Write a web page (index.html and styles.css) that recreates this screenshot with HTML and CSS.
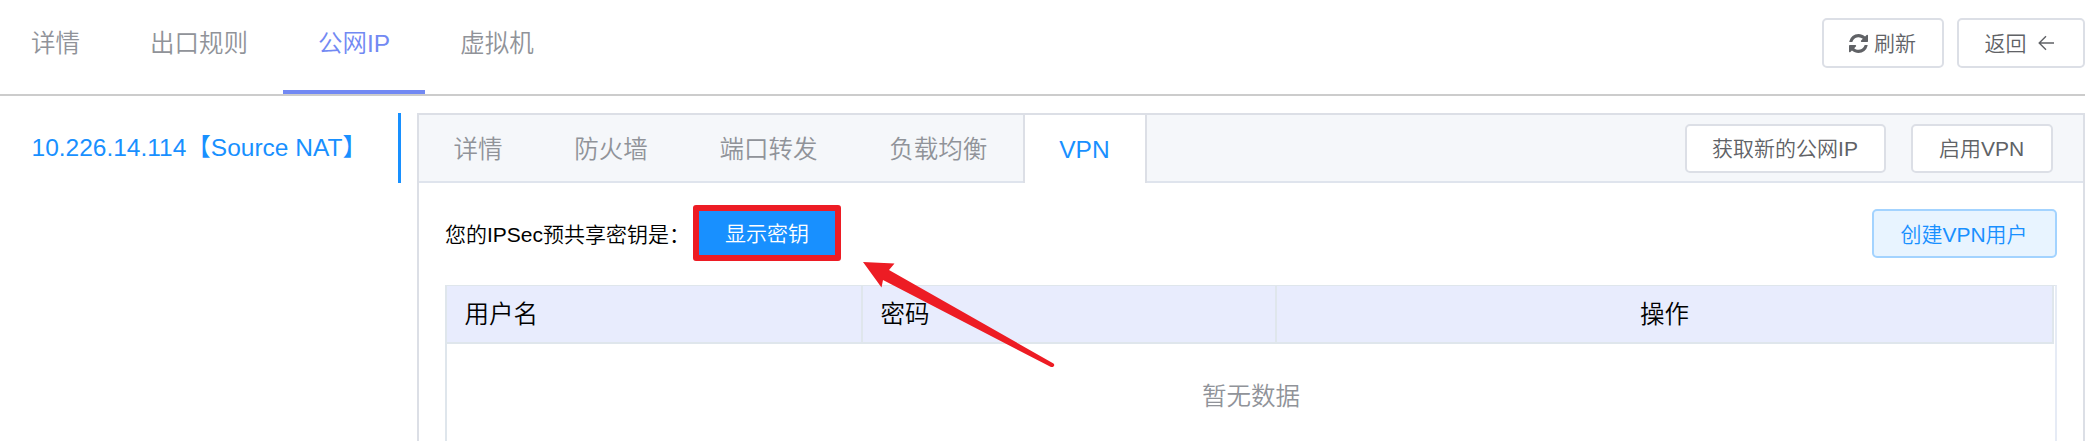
FILE: index.html
```html
<!DOCTYPE html>
<html lang="zh-CN">
<head>
<meta charset="utf-8">
<title>公网IP</title>
<link rel="stylesheet" href="styles.css">
</head>
<body>
<header class="topbar">
  <nav class="tabs">
    <a class="tab">详情</a>
    <a class="tab">出口规则</a>
    <a class="tab tab-active">公网IP</a>
    <a class="tab">虚拟机</a>
  </nav>
  <div class="actions">
    <button class="btn btn-refresh"><svg class="icon-refresh" viewBox="0 0 1536 1536"><path fill="currentColor" d="M1511 928q0 5-1 7-64 268-268 434.500T764 1536q-146 0-282.500-55T238 1324l-129 129q-19 19-45 19t-45-19-19-45V960q0-26 19-45t45-19h448q26 0 45 19t19 45-19 45l-137 137q71 66 161 102t187 36q134 0 250-65t186-179q11-17 53-117 8-23 30-23h192q13 0 22.500 9.500t9.500 22.500zM1536 128v448q0 26-19 45t-45 19h-448q-26 0-45-19t-19-45 19-45l138-138Q969 256 768 256q-134 0-250 65T332 500q-11 17-53 117-8 23-30 23H50q-13 0-22.500-9.500T18 608v-7q65-268 270-434.500T768 0q146 0 284 55.500T1297 212l130-129q19-19 45-19t45 19 19 45z"/></svg><span>刷新</span></button>
    <button class="btn btn-back"><span>返回</span><svg class="icon-back" viewBox="0 0 17 16"><path d="M16 8H1.500M8 1.200L1.200 8L8 14.800"/></svg></button>
  </div>
</header>
<main class="layout">
  <aside class="sidebar"><a class="ip-item">10.226.14.114【Source NAT】</a></aside>
  <section class="card">
    <div class="card-head">
      <nav class="card-tabs">
        <a class="card-tab">详情</a>
        <a class="card-tab">防火墙</a>
        <a class="card-tab">端口转发</a>
        <a class="card-tab">负载均衡</a>
        <a class="card-tab card-tab-active">VPN</a>
      </nav>
      <div class="card-actions">
        <button class="btn btn-new-ip">获取新的公网IP</button>
        <button class="btn btn-enable">启用VPN</button>
      </div>
    </div>
    <div class="card-body">
      <div class="key-row">
        <span class="key-label">您的IPSec预共享密钥是：</span>
        <button class="btn-key">显示密钥</button>
        <button class="btn btn-create">创建VPN用户</button>
      </div>
      <div class="table">
        <div class="table-head">
          <div class="th">用户名</div>
          <div class="th">密码</div>
          <div class="th th-center">操作</div>
        </div>
        <div class="empty">暂无数据</div>
      </div>
    </div>
  </section>
</main>
<svg class="arrow" viewBox="0 0 194 106"><path fill="#ed1c24" d="M0 0L31.500 1.500L26 8L190.500 101.500Q192 103 190.500 104.500Q189 105.500 187 104.500L20 18L18.500 25.500Z"/></svg>
</body>
</html>
```
FILE: styles.css
```css
* { box-sizing: border-box; }

body {
  margin: 0;
  height: 441px;
  overflow: hidden;
  position: relative;
  background: #fff;
  color: #000;
  font: 350 24.5px/1 "Liberation Sans", "Noto Sans CJK SC DemiLight", "Noto Sans CJK SC", sans-serif;
  white-space: nowrap;
}

.topbar {
  display: flex;
  justify-content: space-between;
  width: 2085px;
  height: 96px;
  border-bottom: 2px solid #ccc;
}

.tabs { display: flex; }

.tab {
  height: 94px;
  padding: 0 35px;
  line-height: 88px;
  color: #909399;
}

.tab:first-child { padding-left: 31px; }

.tab-active {
  color: #7289f3;
  border-bottom: 4px solid #7289f3;
}

.actions {
  display: flex;
  gap: 13px;
  padding-top: 18px;
}

.btn {
  display: flex;
  align-items: center;
  justify-content: center;
  height: 49px;
  padding: 0;
  border: 2px solid #dcdfe6;
  border-radius: 5px;
  background: #fff;
  color: #606266;
  font: inherit;
  font-size: 21px;
  line-height: 45px;
}

.btn-refresh { width: 122px; height: 50px; gap: 6px; padding-right: 1px; }
.btn-back { width: 128px; height: 50px; gap: 11px; padding-right: 3px; }
.icon-refresh { width: 19px; height: 19px; }

.icon-back {
  width: 17px;
  height: 16px;
  fill: none;
  stroke: currentColor;
  stroke-width: 1.4;
}

.layout {
  display: flex;
  width: 2085px;
  height: 345px;
  padding-top: 17px;
}

.sidebar { width: 417px; }

.ip-item {
  display: block;
  width: 401px;
  height: 70px;
  padding-left: 31.500px;
  border-right: 3px solid #1890ff;
  color: #1890ff;
  line-height: 69px;
}

.card {
  width: 1668px;
  height: 328px;
  border: 2px solid #dcdfe6;
  border-bottom: 0;
}

.card-head {
  display: flex;
  justify-content: space-between;
  height: 68px;
  background: #f5f7fa;
  box-shadow: inset 0 -2px #dfe4ed;
}

.card-tabs { display: flex; }

.card-tab {
  padding: 0 35.900px;
  line-height: 69px;
  color: #909399;
}

.card-tab:first-child { padding-left: 34.500px; }

.card-tab-active {
  width: 124px;
  margin-left: 0;
  padding: 0 0 0 34px;
  border: solid #dcdfe6;
  border-width: 0 2px;
  background: #fff;
  color: #1890ff;
}

.card-actions {
  display: flex;
  gap: 25px;
  padding: 9px 30px 0 0;
}

.btn-new-ip { width: 201px; padding-right: 1px; }
.btn-enable { width: 142px; padding-right: 1px; }

.card-body { padding: 22px 26px 0; }

.key-row {
  display: flex;
  height: 80px;
}

.key-label {
  width: 248px;
  font-size: 21px;
  line-height: 59px;
}

.btn-key {
  width: 148px;
  height: 56px;
  padding: 2px 0 0;
  border: 6px solid #ed1c24;
  border-radius: 3px;
  background: #1890ff;
  color: #fff;
  font: inherit;
  font-size: 21px;
  line-height: 42px;
}

.btn-create {
  width: 185px;
  margin: 4px 0 0 auto;
  padding: 1px 1px 0 0;
  border-color: #a3d3ff;
  background: #e8f4ff;
  color: #1890ff;
}

.table {
  height: 156px;
  border: solid #dfe6ec;
  border-width: 1px 2px 0;
  border-right-color: #e6ebf5;
}

.table-head {
  display: grid;
  grid-template-columns: 416px 414px 777px;
  height: 58px;
  border-bottom: 2px solid #dfe6ec;
  width: 1607px;
  background: #e8ecfd;
}

.th {
  padding-left: 17.500px;
  border-right: 2px solid #dfe6ec;
  line-height: 57px;
}

.th-center {
  padding: 0;
  text-align: center;
}

.empty {
  height: 97px;
  text-align: center;
  line-height: 106px;
  color: #909399;
}

/* pointer drawn over the table */
.arrow {
  position: absolute;
  left: 863px;
  top: 262px;
  width: 194px;
  height: 106px;
}
```
